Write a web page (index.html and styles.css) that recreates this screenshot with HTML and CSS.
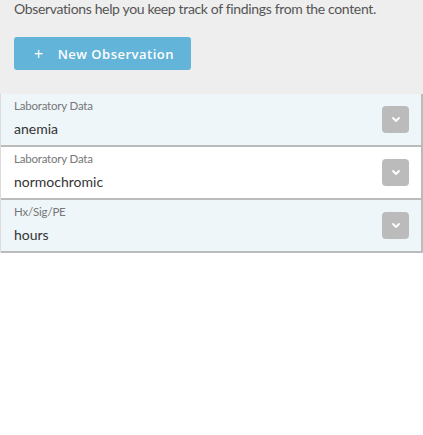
FILE: index.html
```html
<!DOCTYPE html>
<html>
<head>
<meta charset="utf-8">
<link rel="stylesheet" href="styles.css">
</head>
<body>
<div class="top">
  <p class="intro">Observations help you keep track of findings from the content.</p>
  <button class="new-btn"><span class="plus">+</span>New Observation</button>
</div>
<div class="list">
  <div class="row alt">
    <div class="info"><div class="cat">Laboratory Data</div><div class="val">anemia</div></div>
    <span class="toggle"><svg width="10" height="7" viewBox="0 0 10 7"><path d="M2 2l3 3 3-3" fill="none" stroke="#fff" stroke-width="1.8" stroke-linecap="round" stroke-linejoin="round"/></svg></span>
  </div>
  <div class="row">
    <div class="info"><div class="cat">Laboratory Data</div><div class="val">normochromic</div></div>
    <span class="toggle"><svg width="10" height="7" viewBox="0 0 10 7"><path d="M2 2l3 3 3-3" fill="none" stroke="#fff" stroke-width="1.8" stroke-linecap="round" stroke-linejoin="round"/></svg></span>
  </div>
  <div class="row alt">
    <div class="info"><div class="cat">Hx/Sig/PE</div><div class="val">hours</div></div>
    <span class="toggle"><svg width="10" height="7" viewBox="0 0 10 7"><path d="M2 2l3 3 3-3" fill="none" stroke="#fff" stroke-width="1.8" stroke-linecap="round" stroke-linejoin="round"/></svg></span>
  </div>
</div>
</body>
</html>
```

FILE: styles.css
```css
html, body { margin: 0; padding: 0; background: #fff; }
body { font-family: Lato, "Open Sans", sans-serif; color: #555; }
.top { background: #eeeeee; padding: 0 14px 24px; }
.intro { margin: 0; font-size: 14px; line-height: 18px; letter-spacing: -0.35px; color: #555; }
.new-btn {
  margin-top: 19px; height: 33px; width: 177px; border: none; border-radius: 3px;
  background: #63b4d9; color: #fff; font-family: "Open Sans", sans-serif; font-weight: 600;
  font-size: 13px; letter-spacing: 0.5px; display: flex; align-items: center; padding: 0 0 0 20px;
}
.plus { font-size: 16px; font-weight: 400; margin-right: 14px; line-height: 1; }
.list { border-left: 1px solid #dcdcdc; }
.row { display: flex; align-items: center; justify-content: space-between; height: 51px; padding: 0 12px 0 13px; border-right: 2px solid #bbb; border-bottom: 2px solid #bbb; background: #fff; }
.row.alt { background: #eef6fa; }
.info { padding-bottom: 3px; }
.cat { font-size: 11.5px; color: #777; letter-spacing: -0.2px; line-height: 14px; }
.val { font-size: 14px; color: #333; margin-top: 8px; line-height: 16px; }
.toggle { width: 27px; height: 27px; background: #bbb; border-radius: 4px; display: flex; align-items: center; justify-content: center; }
```
